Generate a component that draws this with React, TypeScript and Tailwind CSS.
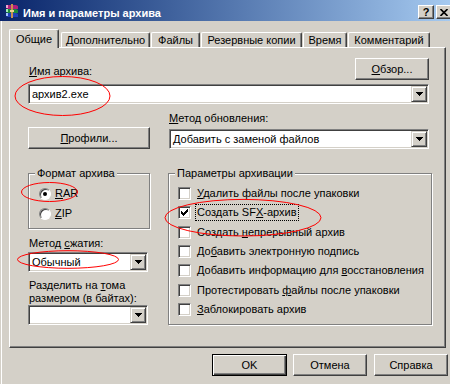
import React from "react";

const raised =
  "border border-t-white border-l-white border-r-[#404040] border-b-[#404040] shadow-[inset_-1px_-1px_0_#808080]";
const sunken =
  "border border-t-[#808080] border-l-[#808080] border-r-white border-b-white shadow-[inset_1px_1px_0_#404040,inset_-1px_-1px_0_#d4d0c8]";
const etched = "border border-[#808080] shadow-[inset_1px_1px_0_#fff,1px_1px_0_#fff]";

function WinRarIcon() {
  return (
    <svg width="16" height="16" viewBox="0 0 16 16" className="ml-[4px] mt-[3px] shrink-0">
      <path d="M2 2h10l2 1v3H4L2 5z" fill="#b0207a" />
      <path d="M2 2h2v3H2z" fill="#f0a0d0" />
      <path d="M2 6h10l2 1v3H4L2 9z" fill="#1c8a3c" />
      <path d="M2 6h2v3H2z" fill="#a0f0b0" />
      <path d="M2 10h10l2 1v3H4l-2-1z" fill="#2040b8" />
      <path d="M2 10h2v3H2z" fill="#a0c0ff" />
      <rect x="7" y="1" width="2" height="14" fill="#c89050" />
      <rect x="6" y="7" width="4" height="2" fill="#f0d090" />
    </svg>
  );
}

function Arrow() {
  return (
    <svg width="7" height="4" viewBox="0 0 7 4" shapeRendering="crispEdges">
      <path d="M0 0h7v1H6v1H5v1H4v1H3V3H2V2H1V1H0z" fill="#000" />
    </svg>
  );
}

function Combo({ value, className }: { value?: string; className: string }) {
  return (
    <div className={`flex h-[20px] items-center bg-white ${sunken} ${className}`}>
      <span className="flex-1 truncate pl-[3px]">{value}</span>
      <div className="mr-[1px] flex h-[16px] w-[16px] items-center justify-center border border-t-[#d4d0c8] border-l-[#d4d0c8] border-r-[#404040] border-b-[#404040] bg-[#d4d0c8] shadow-[inset_1px_1px_0_#fff,inset_-1px_-1px_0_#808080]">
        <Arrow />
      </div>
    </div>
  );
}

function Button({ children, className }: { children: React.ReactNode; className: string }) {
  return (
    <div className={`flex h-[22px] items-center justify-center bg-[#d4d0c8] ${raised} ${className}`}>
      {children}
    </div>
  );
}

function Check({ checked }: { checked?: boolean }) {
  return (
    <div className={`flex h-[13px] w-[13px] shrink-0 items-center justify-center bg-white ${sunken}`}>
      {checked && (
        <svg width="7" height="7" viewBox="0 0 7 7" shapeRendering="crispEdges">
          <path d="M6 0h1v3H6v1H5v1H4v1H3v1H2V6H1V5H0V2h1v1h1v1h1V3h1V2h1V1h1z" fill="#000" />
        </svg>
      )}
    </div>
  );
}

function Radio({ checked }: { checked?: boolean }) {
  return (
    <div className="flex h-[12px] w-[12px] shrink-0 items-center justify-center rounded-full border border-t-[#808080] border-l-[#808080] border-r-white border-b-white bg-white shadow-[inset_1px_1px_0_#404040]">
      {checked && <div className="h-[4px] w-[4px] rounded-full bg-black" />}
    </div>
  );
}

const tabs: [string, number][] = [
  ["Дополнительно", 89],
  ["Файлы", 49],
  ["Резервные копии", 101],
  ["Время", 44],
  ["Комментарий", 82],
];

const options: { before: string; key: string; after: string; checked?: boolean; focus?: boolean }[] = [
  { before: "", key: "У", after: "далить файлы после упаковки" },
  { before: "Создать SF", key: "X", after: "-архив", checked: true, focus: true },
  { before: "Создать ", key: "н", after: "епрерывный архив" },
  { before: "До", key: "б", after: "авить электронную подпись" },
  { before: "Добавить информацию для ", key: "в", after: "осстановления" },
  { before: "Протестировать ", key: "ф", after: "айлы после упаковки" },
  { before: "", key: "З", after: "аблокировать архив" },
];

export default function App() {
  return (
    <div className="relative h-[384px] w-[450px] overflow-hidden bg-[#d4d0c8] font-['Liberation_Sans',Arial,sans-serif] text-[11px] leading-[13px] text-black">
      {/* title bar */}
      <div className="flex h-[21px] bg-linear-to-r from-[#0a246a] to-[#a6caf0]">
        <WinRarIcon />
        <span className="ml-[3px] mt-[7px] font-bold text-white">Имя и параметры архива</span>
        <div className="-mr-[2px] ml-auto mt-[5px] flex gap-[2px]">
          <div className={`flex h-[14px] w-[16px] items-center justify-center bg-[#d4d0c8] font-bold ${raised}`}>?</div>
          <div className={`flex h-[14px] w-[16px] items-center justify-center bg-[#d4d0c8] ${raised}`}>
            <svg width="8" height="7" viewBox="0 0 8 7">
              <path d="M0.5 0L7.5 7M7.5 0L0.5 7" stroke="#000" strokeWidth="1.6" />
            </svg>
          </div>
        </div>
      </div>

      <div className="ml-[1px] h-[363px] border-l border-white pl-[7px] pt-[8px]">
        {/* tabs */}
        <div className="relative z-10 -mb-[1px] flex h-[19px] items-end">
          <div className="flex h-[19px] w-[50px] items-start justify-center rounded-t-[2px] border-l border-t border-r border-t-white border-l-white border-r-[#404040] bg-[#d4d0c8] pt-[3px] shadow-[inset_-1px_0_0_#808080]">
            Общие
          </div>
          {tabs.map(([label, w], i) => (
            <div
              key={label}
              style={{ width: w }}
              className={`mb-[1px] flex h-[15px] items-start justify-center rounded-t-[2px] border-l border-t border-r border-t-white border-l-white border-r-[#404040] pt-[1px] shadow-[inset_-1px_0_0_#808080] ${
                i === 0 ? "ml-[2px]" : "ml-[1px]"
              }`}
            >
              {label}
            </div>
          ))}
        </div>

        {/* panel */}
        <div className="h-[301px] w-[437px] border border-t-white border-l-white border-r-[#404040] border-b-[#404040] pl-[18px] pt-[10px] shadow-[inset_-1px_-1px_0_#808080]">
          <div className="flex h-[22px] w-[401px] items-end justify-between">
            <span className="mb-[2px] ml-[1px]">
              <span className="underline">И</span>мя архива:
            </span>
            <Button className="w-[74px]">
              <span>
                <span className="underline">О</span>бзор...
              </span>
            </Button>
          </div>
          <Combo value="архив2.exe" className="mt-[4px] w-[401px]" />

          <div className="mt-[8px] flex items-end">
            <Button className="w-[122px]">
              <span>
                <span className="underline">П</span>рофили...
              </span>
            </Button>
            <div className="ml-[19px] w-[260px]">
              <div>
                <span className="underline">М</span>етод обновления:
              </div>
              <Combo value="Добавить с заменой файлов" className="mt-[4px] w-[260px]" />
            </div>
          </div>

          <div className="mt-[24px] flex items-start">
            <div className="w-[122px]">
              <div className={`pb-[8px] ${etched}`}>
                <div className="-mt-[7px] ml-[6px] w-fit bg-[#d4d0c8] px-[2px]">Формат архива</div>
                <div className="ml-[10px] mt-[7px] flex h-[13px] items-center">
                  <Radio checked />
                  <span className="ml-[4px]">
                    <span className="underline">R</span>AR
                  </span>
                </div>
                <div className="ml-[10px] mt-[7px] flex h-[13px] items-center">
                  <Radio />
                  <span className="ml-[4px]">
                    <span className="underline">Z</span>IP
                  </span>
                </div>
              </div>
              <div className="ml-[1px] mt-[8px]">
                Метод <span className="underline">с</span>жатия:
              </div>
              <Combo value="Обычный" className="mt-[2px] w-[120px]" />
              <div className="ml-[1px] mt-[7px]">
                Разделить на <span className="underline">т</span>ома
                <br />
                размером (в байтах):
              </div>
              <Combo className="w-[120px]" />
            </div>

            <div className={`ml-[18px] w-[264px] pb-[5px] ${etched}`}>
              <div className="-mt-[7px] ml-[6px] w-fit bg-[#d4d0c8] px-[2px]">Параметры архивации</div>
              <div className="mt-[4px] pl-[9px]">
                {options.map((o) => (
                  <div key={o.before + o.key} className="flex h-[19.33px] items-center">
                    <Check checked={o.checked} />
                    <span
                      className={`ml-[4px] border px-[1px] py-[1px] ${
                        o.focus ? "border-dotted border-black" : "border-transparent"
                      }`}
                    >
                      {o.before}
                      <span className="underline">{o.key}</span>
                      {o.after}
                    </span>
                  </div>
                ))}
              </div>
            </div>
          </div>
        </div>

        {/* dialog buttons */}
        <div className="mt-[6px] flex w-[439px] justify-end">
          <div className="flex h-[22px] w-[75px] items-center justify-center border border-black bg-[#d4d0c8] shadow-[inset_1px_1px_0_#fff,inset_-1px_-1px_0_#404040,inset_-2px_-2px_0_#808080]">
            OK
          </div>
          <Button className="ml-[6px] w-[74px]">Отмена</Button>
          <Button className="ml-[7px] w-[74px]">Справка</Button>
        </div>
      </div>

      {/* red annotation ellipses */}
      <svg className="pointer-events-none absolute left-0 top-0" width="450" height="384">
        <ellipse cx="62.5" cy="96" rx="47.5" ry="19.5" fill="none" stroke="#ff0000" strokeWidth="1" />
        <ellipse cx="49.5" cy="192" rx="28" ry="9.5" fill="none" stroke="#ff0000" strokeWidth="1" />
        <ellipse cx="68" cy="259.5" rx="50.5" ry="8.8" fill="none" stroke="#ff0000" strokeWidth="1" />
        <ellipse cx="243" cy="217.7" rx="78" ry="18.3" fill="none" stroke="#ff0000" strokeWidth="1" />
      </svg>
    </div>
  );
}
